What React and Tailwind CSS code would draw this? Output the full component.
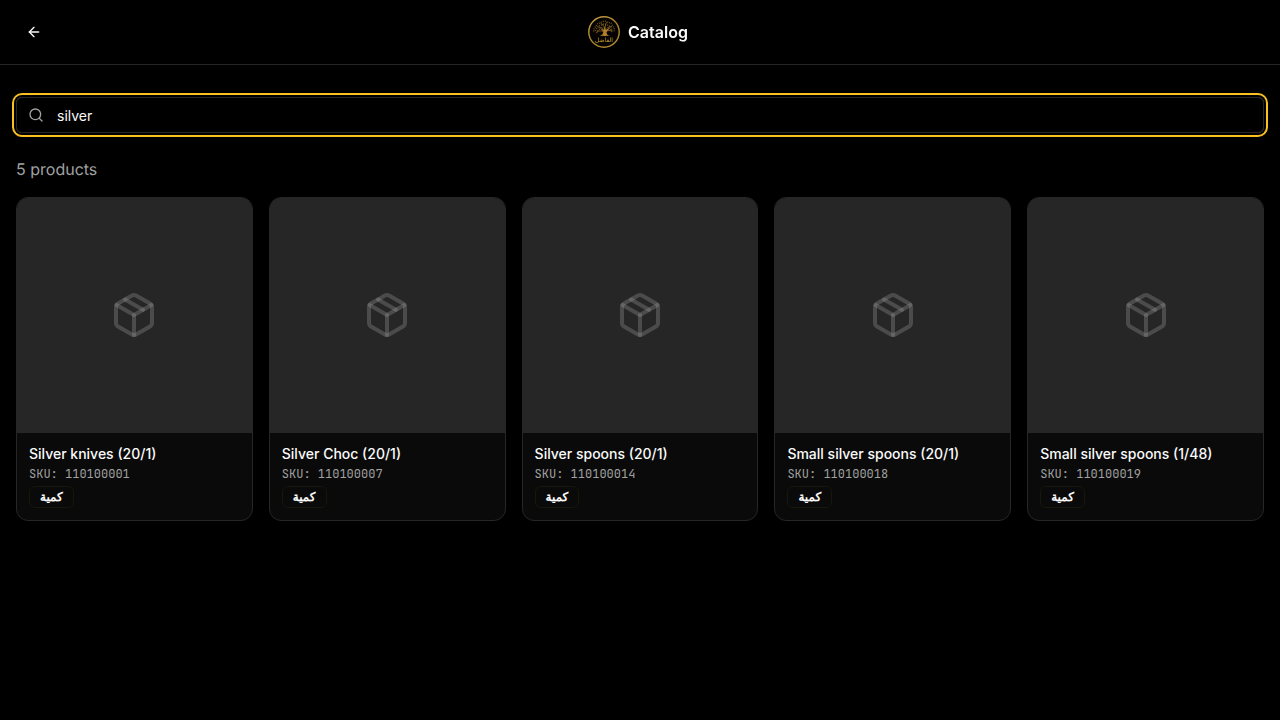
import React from "react";
import { ArrowLeft, Package, Search } from "lucide-react";

const products = [
  { name: "Silver knives (20/1)", sku: "110100001" },
  { name: "Silver Choc (20/1)", sku: "110100007" },
  { name: "Silver spoons (20/1)", sku: "110100014" },
  { name: "Small silver spoons (20/1)", sku: "110100018" },
  { name: "Small silver spoons (1/48)", sku: "110100019" },
];

function Logo() {
  return (
    <svg viewBox="0 0 32 32" className="h-8 w-8" fill="none">
      <defs>
        <linearGradient id="gold" x1="0" y1="0" x2="1" y2="1">
          <stop offset="0" stopColor="#c9a545" />
          <stop offset=".5" stopColor="#a8802c" />
          <stop offset="1" stopColor="#b58f38" />
        </linearGradient>
      </defs>
      <circle cx="16" cy="16" r="15.2" fill="#050402" stroke="url(#gold)" strokeWidth="1.4" />
      <path d="M11 20c3-.6 4.300-1.800 4.400-4.500L12 12l4 2 .5-3.500L18 14l4.500-3-4 5c.2 2.300 1 3.400 3.500 4l-4-.3-1.300.5-1.500-.5z" fill="#b5822c" />
      <g stroke="#a8782b" strokeLinecap="round" strokeWidth=".7">
        <path d="M16.500 14c-1.500-2-3.500-3-6-3M17.500 14.500c1-2.500 3-4 6-4M16.500 12c-.5-2.500-2-3.500-3.500-4.500M17.200 12c0-2.500.5-4 1.500-5.500M18 15.500c2-1.200 4-1.200 6-.7M15.500 15.500c-2-1-4.500-1-6.500.3" />
      </g>
      <g stroke="#8f692a" strokeWidth="1.500" strokeDasharray="1 1.100" opacity=".7">
        <path d="M5.800 15.500c-.5-3 1-4 2.500-5 0-2.500 2-3.300 4-3.300C14 4.700 18 4.500 20 6.700c2.500-.5 4.300 1 4.300 3.300 2 1 2.500 3.300 1.700 5.500" />
        <path d="M7.500 15c1-3.500 3-5.500 6-6 2-1.500 5-1 6.500.5 2 .5 3.500 2 4 5.500" />
        <path d="M8.500 17c1-2.500 2.500-4 4.500-4.500M20.500 12.500c2 .5 3 2 3.500 4.500" />
      </g>
      <text x="16" y="25.600" textAnchor="middle" textLength="18" lengthAdjust="spacingAndGlyphs" fill="#c9a035" className="font-['DejaVu_Sans',sans-serif] text-[6px] font-normal">
        الفاضل
      </text>
    </svg>
  );
}

function ProductCard({ name, sku }) {
  return (
    <article className="overflow-hidden rounded-xl border border-[#262626] bg-[#0a0a0a]">
      <div className="flex aspect-square items-center justify-center bg-[#262626]">
        <Package className="h-12 w-12 text-[#a1a1a1]/30" />
      </div>
      <div className="space-y-1 p-3">
        <h3 className="truncate text-sm leading-tight font-medium">{name}</h3>
        <p className="font-['JetBrains_Mono','Liberation_Mono',monospace] text-xs text-[#a1a1a1]">SKU: {sku}</p>
        <div className="flex">
          <span className="rounded-md border border-[#17170c] px-2.5 py-0.5 text-xs font-semibold [text-rendering:geometricPrecision]">كمية</span>
        </div>
      </div>
    </article>
  );
}

export default function App() {
  return (
    <div className="min-h-screen bg-black font-[Inter,sans-serif] text-[#fafafa]">
      <header className="grid h-[65px] grid-cols-[1fr_auto_1fr] items-center border-b border-[#262626] px-4 backdrop-blur">
        <button aria-label="Back" className="flex h-9 w-9 items-center justify-center">
          <ArrowLeft className="h-4 w-4" />
        </button>
        <div className="mr-1 flex items-center gap-2">
          <Logo />
          <h1 className="text-base font-semibold">Catalog</h1>
        </div>
      </header>
      <main className="px-4 pt-8">
        <label className="flex h-9 items-center gap-3 rounded-md border border-[#262626] px-[11px] ring-2 ring-[#fac022] ring-offset-2 ring-offset-black">
          <Search className="h-4 w-4 shrink-0 text-[#a1a1a1]" />
          <input type="text" defaultValue="silver" className="min-w-0 flex-1 bg-transparent pt-0.5 pl-px text-sm outline-none" />
        </label>
        <p className="mt-6 text-base text-[#a1a1a1] [text-rendering:geometricPrecision]">5 products</p>
        <div className="mt-4 grid grid-cols-5 gap-4">
          {products.map((p) => (
            <ProductCard key={p.sku} name={p.name} sku={p.sku} />
          ))}
        </div>
      </main>
    </div>
  );
}
